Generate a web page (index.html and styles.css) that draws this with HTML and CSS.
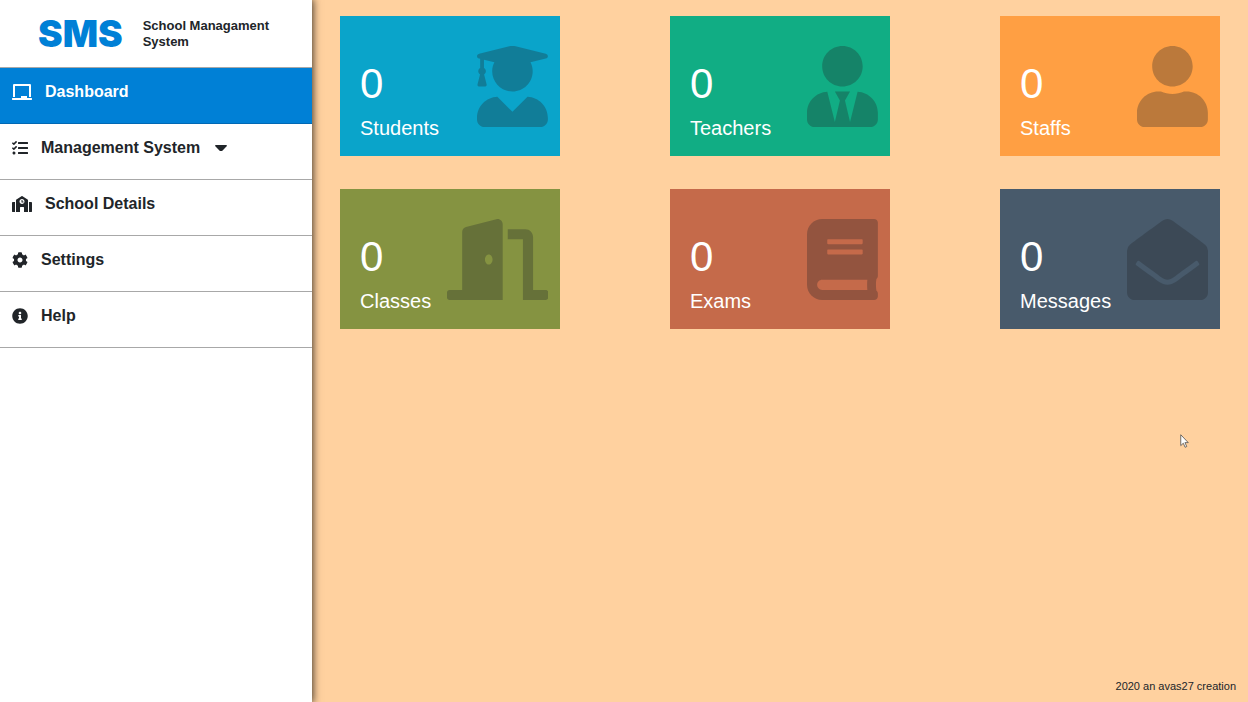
FILE: index.html
```html
<!DOCTYPE html>
<html lang="en">
<head>
<meta charset="utf-8">
<meta name="viewport" content="width=device-width, initial-scale=1">
<title>School Managament System</title>
<link rel="stylesheet" href="styles.css">
</head>
<body>
<div class="app">
  <aside class="sidebar">
    <header class="brand">
      <span class="logo">SMS</span>
      <span class="brand-name">School Managament System</span>
    </header>
    <nav class="nav">
      <a class="nav-item active" href="#dashboard" aria-current="page">
        <svg class="nav-icon" viewBox="0 0 640 512" aria-hidden="true"><path d="M96 64h448v352h64V40c0-22.06-17.94-40-40-40H72C49.94 0 32 17.94 32 40v376h64V64zm528 384H480v-64H288v64H16c-8.84 0-16 7.16-16 16v32c0 8.84 7.16 16 16 16h608c8.84 0 16-7.16 16-16v-32c0-8.84-7.16-16-16-16z"/></svg>
        <span>Dashboard</span>
      </a>
      <a class="nav-item" href="#management">
        <svg class="nav-icon" viewBox="0 0 512 512" aria-hidden="true"><path d="M139.61 35.5a12 12 0 0 0-17 0L58.93 98.81l-22.7-22.12a12 12 0 0 0-17 0L3.53 92.41a12 12 0 0 0 0 17l47.59 47.4a12.78 12.78 0 0 0 17.61 0l15.59-15.62L156.52 69a12.09 12.09 0 0 0 .09-17zm0 159.19a12 12 0 0 0-17 0l-63.68 63.72-22.7-22.1a12 12 0 0 0-17 0L3.53 252a12 12 0 0 0 0 17L51 316.5a12.77 12.77 0 0 0 17.6 0l15.7-15.69 72.2-72.22a12 12 0 0 0 .09-16.9zM64 368c-26.49 0-48.59 21.5-48.59 48S37.53 464 64 464a48 48 0 0 0 0-96zm432 16H208a16 16 0 0 0-16 16v32a16 16 0 0 0 16 16h288a16 16 0 0 0 16-16v-32a16 16 0 0 0-16-16zm0-320H208a16 16 0 0 0-16 16v32a16 16 0 0 0 16 16h288a16 16 0 0 0 16-16V80a16 16 0 0 0-16-16zm0 160H208a16 16 0 0 0-16 16v32a16 16 0 0 0 16 16h288a16 16 0 0 0 16-16v-32a16 16 0 0 0-16-16z"/></svg>
        <span>Management System</span>
        <svg class="caret" viewBox="10 192 300 169" aria-hidden="true"><path d="M31.3 192h257.3c17.8 0 26.7 21.5 14.1 34.1L174.1 354.8c-7.8 7.8-20.5 7.8-28.3 0L17.2 226.1C4.6 213.5 13.5 192 31.3 192z"/></svg>
      </a>
      <a class="nav-item" href="#school">
        <svg class="nav-icon" viewBox="0 0 640 512" aria-hidden="true"><path d="M0 224v272c0 8.84 7.16 16 16 16h80V192H32c-17.67 0-32 14.33-32 32zm360-48h-24v-40c0-4.42-3.58-8-8-8h-16c-4.42 0-8 3.58-8 8v64c0 4.42 3.58 8 8 8h48c4.42 0 8-3.58 8-8v-16c0-4.42-3.58-8-8-8zm137.75-63.96l-160-106.67a32.02 32.02 0 0 0-35.5 0l-160 106.67A32.002 32.002 0 0 0 128 138.66V512h128V368c0-8.84 7.16-16 16-16h96c8.84 0 16 7.16 16 16v144h128V138.67c0-10.7-5.35-20.69-14.25-26.63zM320 256c-44.18 0-80-35.82-80-80s35.82-80 80-80 80 35.82 80 80-35.82 80-80 80zm288-64h-64v320h80c8.84 0 16-7.16 16-16V224c0-17.67-14.33-32-32-32z"/></svg>
        <span>School Details</span>
      </a>
      <a class="nav-item" href="#settings">
        <svg class="nav-icon" viewBox="0 0 512 512" aria-hidden="true"><path d="M487.4 315.7l-42.6-24.6c4.3-23.2 4.3-47 0-70.2l42.6-24.6c4.9-2.8 7.1-8.6 5.5-14-11.1-35.6-30-67.8-54.7-94.6-3.8-4.1-10-5.1-14.8-2.3L380.8 110c-17.9-15.4-38.5-27.3-60.8-35.1V25.8c0-5.6-3.9-10.5-9.4-11.7-36.7-8.2-74.3-7.8-109.2 0-5.5 1.2-9.4 6.1-9.4 11.7V75c-22.2 7.9-42.8 19.8-60.8 35.1L88.7 85.5c-4.9-2.8-11-1.9-14.8 2.3-24.7 26.7-43.6 58.9-54.7 94.6-1.7 5.4.6 11.2 5.5 14L67.3 221c-4.3 23.2-4.3 47 0 70.2l-42.6 24.6c-4.9 2.8-7.1 8.6-5.5 14 11.1 35.6 30 67.8 54.7 94.6 3.8 4.1 10 5.1 14.8 2.3l42.6-24.6c17.9 15.4 38.5 27.3 60.8 35.1v49.2c0 5.6 3.9 10.5 9.4 11.7 36.7 8.2 74.3 7.8 109.2 0 5.5-1.2 9.4-6.1 9.4-11.7v-49.2c22.2-7.9 42.8-19.8 60.8-35.1l42.6 24.6c4.9 2.8 11 1.9 14.8-2.3 24.7-26.7 43.6-58.9 54.7-94.6 1.5-5.5-.7-11.3-5.6-14.1zM256 336c-44.1 0-80-35.9-80-80s35.9-80 80-80 80 35.9 80 80-35.9 80-80 80z"/></svg>
        <span>Settings</span>
      </a>
      <a class="nav-item" href="#help">
        <svg class="nav-icon" viewBox="0 0 512 512" aria-hidden="true"><path d="M256 8C119.043 8 8 119.083 8 256c0 136.997 111.043 248 248 248s248-111.003 248-248C504 119.083 392.957 8 256 8zm0 110c23.196 0 42 18.804 42 42s-18.804 42-42 42-42-18.804-42-42 18.804-42 42-42zm56 254c0 6.627-5.373 12-12 12h-88c-6.627 0-12-5.373-12-12v-24c0-6.627 5.373-12 12-12h12v-64h-12c-6.627 0-12-5.373-12-12v-24c0-6.627 5.373-12 12-12h64c6.627 0 12 5.373 12 12v100h12c6.627 0 12 5.373 12 12v24z"/></svg>
        <span>Help</span>
      </a>
    </nav>
  </aside>
  <div class="content">
    <main class="cards">
      <section class="card students">
        <div class="card-text"><span class="count">0</span><span class="label">Students</span></div>
        <svg class="card-icon" viewBox="0 0 448 512" aria-hidden="true"><path d="M319.4 320.6L224 416l-95.4-95.4C57.1 323.7 0 382.2 0 454.4v9.6c0 26.5 21.5 48 48 48h352c26.5 0 48-21.5 48-48v-9.6c0-72.2-57.1-130.7-128.6-133.8zM13.6 79.8l6.4 1.5v58.4c-7 4.2-12 11.5-12 20.3 0 8.4 4.6 15.4 11.1 19.7L3.5 242c-1.7 6.9 2.1 14 7.6 14h41.8c5.5 0 9.3-7.1 7.6-14l-15.6-62.3C51.4 175.4 56 168.4 56 160c0-8.8-5-16.1-12-20.3V87.1l66 15.9c-8.6 17.2-14 36.4-14 57 0 70.7 57.3 128 128 128s128-57.3 128-128c0-20.6-5.3-39.8-14-57l96.3-23.2c18.2-4.4 18.2-27.1 0-31.5l-190.4-46c-13-3.1-26.7-3.1-39.7 0L13.6 48.2c-18.1 4.4-18.1 27.2 0 31.6z"/></svg>
      </section>
      <section class="card teachers">
        <div class="card-text"><span class="count">0</span><span class="label">Teachers</span></div>
        <svg class="card-icon" viewBox="0 0 448 512" aria-hidden="true"><path d="M224 256c70.7 0 128-57.3 128-128S294.7 0 224 0 96 57.3 96 128s57.3 128 128 128zm95.8 32.6L272 480l-32-136 32-56h-96l32 56-32 136-47.8-191.4C56.9 292 0 350.3 0 422.4V464c0 26.5 21.5 48 48 48h352c26.5 0 48-21.5 48-48v-41.6c0-72.1-56.9-130.4-128.2-133.8z"/></svg>
      </section>
      <section class="card staffs">
        <div class="card-text"><span class="count">0</span><span class="label">Staffs</span></div>
        <svg class="card-icon" viewBox="0 0 448 512" aria-hidden="true"><path d="M224 256c70.7 0 128-57.3 128-128S294.7 0 224 0 96 57.3 96 128s57.3 128 128 128zm89.6 32h-16.7c-22.2 10.2-46.9 16-72.9 16s-50.6-5.8-72.9-16h-16.7C60.2 288 0 348.2 0 422.4V464c0 26.5 21.5 48 48 48h352c26.5 0 48-21.5 48-48v-41.6c0-74.2-60.2-134.4-134.4-134.4z"/></svg>
      </section>
      <section class="card classes">
        <div class="card-text"><span class="count">0</span><span class="label">Classes</span></div>
        <svg class="card-icon" viewBox="0 0 640 512" aria-hidden="true"><path d="M624 448h-80V113.45C544 86.19 522.47 64 496 64H384v64h96v384h144c8.84 0 16-7.16 16-16v-32c0-8.84-7.16-16-16-16zM312.24 1.01l-192 49.74C105.99 54.44 96 67.7 96 82.92V448H16c-8.84 0-16 7.16-16 16v32c0 8.84 7.16 16 16 16h336V33.18c0-21.58-19.56-37.41-39.76-32.17zM264 288c-13.25 0-24-14.33-24-32s10.75-32 24-32 24 14.33 24 32-10.75 32-24 32z"/></svg>
      </section>
      <section class="card exams">
        <div class="card-text"><span class="count">0</span><span class="label">Exams</span></div>
        <svg class="card-icon" viewBox="0 0 448 512" aria-hidden="true"><path d="M448 360V24c0-13.3-10.7-24-24-24H96C43 0 0 43 0 96v320c0 53 43 96 96 96h328c13.3 0 24-10.7 24-24v-16c0-7.5-3.5-14.3-8.9-18.7-4.2-15.4-4.2-59.3 0-74.7 5.4-4.3 8.9-11.1 8.9-18.6zM128 134c0-3.3 2.7-6 6-6h212c3.3 0 6 2.7 6 6v20c0 3.3-2.7 6-6 6H134c-3.3 0-6-2.7-6-6v-20zm0 64c0-3.3 2.7-6 6-6h212c3.3 0 6 2.7 6 6v20c0 3.3-2.7 6-6 6H134c-3.3 0-6-2.7-6-6v-20zm253.4 250H96c-17.7 0-32-14.3-32-32 0-17.6 14.4-32 32-32h285.4c-1.9 17.1-1.9 46.9 0 64z"/></svg>
      </section>
      <section class="card messages">
        <div class="card-text"><span class="count">0</span><span class="label">Messages</span></div>
        <svg class="card-icon" viewBox="0 0 512 512" aria-hidden="true"><path d="M512 464c0 26.51-21.49 48-48 48H48c-26.51 0-48-21.49-48-48V200.724a48 48 0 0 1 18.387-37.776c24.913-19.529 45.501-35.365 164.2-121.511C199.412 29.17 232.797-.347 256 .003c23.198-.354 56.596 29.172 73.413 41.433 118.687 86.137 139.303 101.995 164.2 121.512A48 48 0 0 1 512 200.724V464zm-65.666-196.605c-2.563-3.728-7.7-4.595-11.339-1.907-22.845 16.873-55.462 40.705-105.582 77.079-16.825 12.266-50.21 41.781-73.413 41.43-23.211.344-56.559-29.143-73.413-41.43-50.114-36.37-82.734-60.204-105.582-77.079-3.639-2.688-8.776-1.821-11.339 1.907l-9.072 13.196a7.998 7.998 0 0 0 1.839 10.967c22.887 16.899 55.454 40.69 105.303 76.868 20.274 14.781 56.524 47.813 92.264 47.573 35.724.242 71.961-32.771 92.263-47.573 49.85-36.179 82.418-59.97 105.303-76.868a7.998 7.998 0 0 0 1.839-10.967l-9.071-13.196z"/></svg>
      </section>
    </main>
    <footer class="footer">2020 an avas27 creation</footer>
  </div>
</div>
<svg class="pointer" viewBox="0 0 12 19" aria-hidden="true"><path d="M1 1v14.5l3.4-3.2 2.4 5.4 2.2-1-2.4-5.2H11z"/></svg>
</body>
</html>
```

FILE: styles.css
```css
*,
*::before,
*::after {
  box-sizing: border-box;
}

body {
  margin: 0;
  background: #ffd19f;
  color: #212529;
  font-family: "Liberation Sans", Arial, sans-serif;
}

.app {
  display: flex;
  min-height: 100vh;
}

.sidebar {
  width: 25%;
  background: #fff;
  box-shadow: 0 0 8px 1px rgba(0, 0, 0, 0.75);
}

.brand {
  display: flex;
  align-items: center;
  gap: 20px;
  min-height: 68px;
  padding: 0 36px 0 38px;
  border-bottom: 1px solid #a8a8a8;
}

.logo {
  color: #0080d6;
  font-family: "Arial Black", Inter, sans-serif;
  font-size: 37px;
  font-weight: 900;
  line-height: 40px;
}

.brand-name {
  font-size: 13px;
  font-weight: 700;
  line-height: 16px;
}

.nav {
  display: flex;
  flex-direction: column;
}

.nav-item {
  display: flex;
  align-items: center;
  gap: 13px;
  padding: 12px 12px 19px;
  border-bottom: 1px solid #a8a8a8;
  color: #212529;
  font-size: 16px;
  font-weight: 700;
  line-height: 24px;
  text-decoration: none;
}

.nav-item.active {
  background: #0080d6;
  border-bottom-color: #0068b4;
  color: #fff;
}

.nav-icon {
  height: 16px;
  fill: currentColor;
}

.caret {
  width: 12px;
  margin-left: 2px;
  fill: currentColor;
}

.content {
  display: flex;
  flex: 1;
  flex-direction: column;
  justify-content: space-between;
}

.cards {
  display: grid;
  grid-template-columns: repeat(3, 25%);
  justify-content: space-between;
  row-gap: 33px;
  padding: 16px 28px;
}

.card {
  display: flex;
  align-items: center;
  justify-content: space-between;
  min-height: 140px;
  padding: 0 12px 0 20px;
  color: #fff;
}

.card-text {
  display: flex;
  flex-direction: column;
  padding-top: 28px;
}

.count {
  font-size: 42px;
  line-height: 56px;
}

.label {
  font-size: 20px;
  line-height: 32px;
}

.card-icon {
  height: 81px;
  fill: #212529;
  opacity: 0.3;
}

.students { background: #0aa4ca; }
.teachers { background: #11ad84; }
.staffs { background: #ff9f43; }
.classes { background: #859341; }
.exams { background: #c56a4a; }
.messages { background: #485a6b; }

.footer {
  padding: 8px 12px;
  font-size: 11px;
  line-height: 16px;
  text-align: right;
}

.pointer {
  position: absolute;
  top: 434px;
  left: 1180px;
  width: 9px;
  fill: #fff;
  stroke: #444;
}
```
